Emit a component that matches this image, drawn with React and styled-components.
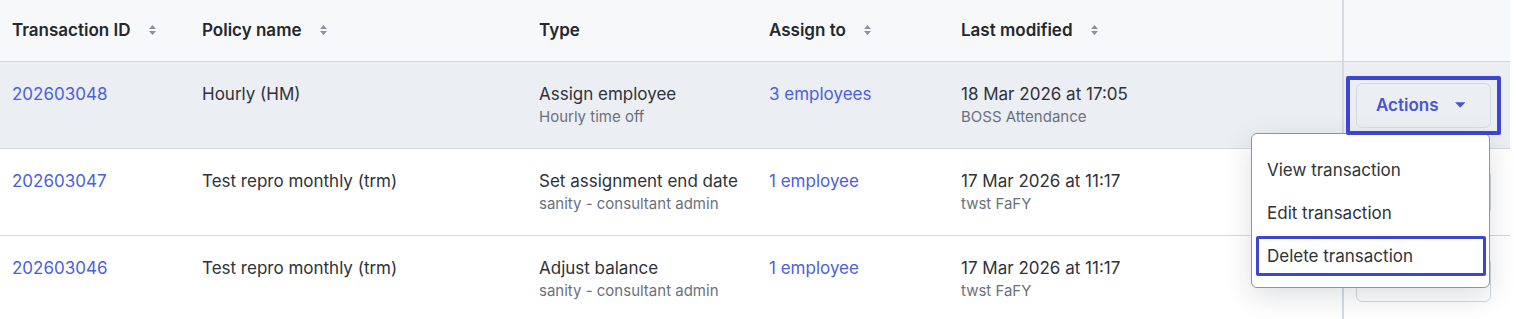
import React from 'react';
import styled, { createGlobalStyle } from 'styled-components';

const GlobalStyle = createGlobalStyle`
  body {
    margin: 0;
    background: #ffffff;
    font-family: Inter, "Noto Sans", sans-serif;
    color: #2e323a;
  }
`;

const columns = '190px 337px 230px 192px 393px 1fr';

const rows = [
  {
    id: '202603048',
    policy: 'Hourly (HM)',
    type: 'Assign employee',
    typeSub: 'Hourly time off',
    assign: '3 employees',
    date: '18 Mar 2026 at 17:05',
    by: 'BOSS Attendance',
    hover: true,
    open: true,
  },
  {
    id: '202603047',
    policy: 'Test repro monthly (trm)',
    type: 'Set assignment end date',
    typeSub: 'sanity - consultant admin',
    assign: '1 employee',
    date: '17 Mar 2026 at 11:17',
    by: 'twst FaFY',
  },
  {
    id: '202603046',
    policy: 'Test repro monthly (trm)',
    type: 'Adjust balance',
    typeSub: 'sanity - consultant admin',
    assign: '1 employee',
    date: '17 Mar 2026 at 11:17',
    by: 'twst FaFY',
  },
];

const Table = styled.div`
  width: 1510px;
`;

const HeaderRow = styled.div`
  display: grid;
  grid-template-columns: ${columns};
  height: 61px;
  background: #f7f8fa;
  border-bottom: 1px solid #d3d8df;
`;

const HeaderCell = styled.div`
  display: flex;
  align-items: center;
  padding-left: 12px;
  padding-bottom: 1px;
  font-size: 17px;
  font-weight: 600;
  color: #23272e;
`;

const SortIcon = styled.svg`
  margin-left: 17px;
  width: 9px;
  height: 12px;
  fill: #8b909a;
`;

const Row = styled.div`
  display: grid;
  grid-template-columns: ${columns};
  height: 86px;
  background: ${(p) => (p.$hover ? '#ebeef2' : '#ffffff')};
  border-bottom: 1px solid #d3d8df;
`;

const Cell = styled.div`
  padding: 20px 12px 0;
  font-size: 17px;
  line-height: 24px;
  color: #2e323a;
`;

const Link = styled.a`
  color: #4b5fe0;
  text-decoration: none;
`;

const SubText = styled.div`
  font-size: 15px;
  line-height: 22px;
  color: #6b717c;
`;

const ActionCell = styled.div`
  position: relative;
  display: flex;
  align-items: center;
  padding-left: 12px;
  border-left: 2px solid #d7dbe1;
`;

const ActionButton = styled.button`
  position: relative;
  display: flex;
  align-items: center;
  width: 135px;
  height: 45px;
  padding: 0 25px 0 19px;
  border: 1px solid #d3d8df;
  border-radius: 6px;
  background: transparent;
  font-family: inherit;
  font-size: 17px;
  font-weight: 600;
  color: #4655d4;
  gap: 16px;
  z-index: ${(p) => (p.$marked ? 30 : 'auto')};

  &::after {
    content: '';
    display: ${(p) => (p.$marked ? 'block' : 'none')};
    position: absolute;
    top: -8px;
    bottom: -8px;
    left: -11px;
    right: -11px;
    border: 4px solid #3e46cf;
    border-radius: 2px;
  }
`;

const Caret = styled.svg`
  width: 11px;
  height: 6px;
  fill: #4655d4;
`;

const Menu = styled.div`
  position: absolute;
  top: 71px;
  right: 20px;
  box-sizing: border-box;
  width: 239px;
  padding: 16px 3px 11px 4px;
  background: #ffffff;
  border: 1px solid #8a94a6;
  border-radius: 6px;
  box-shadow: 0 8px 28px rgba(20, 30, 50, 0.14);
  display: flex;
  flex-direction: column;
  gap: 3px;
  z-index: 10;
`;

const MenuItem = styled.div`
  height: 40px;
  box-sizing: border-box;
  display: flex;
  align-items: center;
  padding-left: ${(p) => (p.$marked ? '8px' : '11px')};
  font-size: 17px;
  color: #2e323a;
  border: ${(p) => (p.$marked ? '3px solid #3e46cf' : 'none')};
  border-radius: 2px;
`;

const Sort = () => (
  <SortIcon viewBox="0 0 9 12">
    <path d="M4.5 1 L8 5 H1 Z" />
    <path d="M1 7 H8 L4.5 11 Z" />
  </SortIcon>
);

const headers = [
  { label: 'Transaction ID', sort: true },
  { label: 'Policy name', sort: true },
  { label: 'Type', sort: false },
  { label: 'Assign to', sort: true },
  { label: 'Last modified', sort: true },
];

export default function App() {
  return (
    <>
      <GlobalStyle />
      <Table>
        <HeaderRow>
          {headers.map((h) => (
            <HeaderCell key={h.label}>
              {h.label}
              {h.sort && <Sort />}
            </HeaderCell>
          ))}
          <ActionCell />
        </HeaderRow>
        {rows.map((r) => (
          <Row key={r.id} $hover={r.hover}>
            <Cell>
              <Link href="#">{r.id}</Link>
            </Cell>
            <Cell>{r.policy}</Cell>
            <Cell>
              {r.type}
              <SubText>{r.typeSub}</SubText>
            </Cell>
            <Cell>
              <Link href="#">{r.assign}</Link>
            </Cell>
            <Cell>
              {r.date}
              <SubText>{r.by}</SubText>
            </Cell>
            <ActionCell>
              <ActionButton $marked={r.open}>
                Actions
                <Caret viewBox="0 0 11 6">
                  <path d="M0 0 H11 L5.5 6 Z" />
                </Caret>
              </ActionButton>
              {r.open && (
                <Menu>
                  <MenuItem>View transaction</MenuItem>
                  <MenuItem>Edit transaction</MenuItem>
                  <MenuItem $marked>Delete transaction</MenuItem>
                </Menu>
              )}
            </ActionCell>
          </Row>
        ))}
      </Table>
    </>
  );
}
